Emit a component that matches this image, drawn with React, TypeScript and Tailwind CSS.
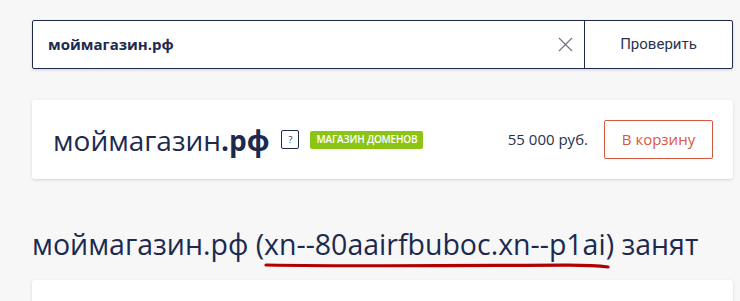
const NAVY = 'text-[#1c2a4f]';

function ClearIcon() {
  return (
    <svg width="15" height="15" viewBox="0 0 15 15" className="text-[#6f7589]">
      <path d="M1 1L14 14M14 1L1 14" stroke="currentColor" strokeWidth="1.2" fill="none" />
    </svg>
  );
}

function SearchBar() {
  return (
    <div className="flex h-[49px] w-[701px] rounded-[2px] border border-[#1e2a4c] bg-white shadow-[0_1px_3px_rgba(30,42,76,0.18)]">
      <div className="flex flex-1 items-center pl-[15px] pr-[4px]">
        <span className={`flex-1 text-[15px] font-bold ${NAVY}`}>моймагазин.рф</span>
        <button className="flex h-[40px] w-[30px] items-center justify-center">
          <ClearIcon />
        </button>
      </div>
      <button className="w-[148px] border-l border-[#1e2a4c] font-['Roboto'] text-[15px] text-[#2a3352]">
        Проверить
      </button>
    </div>
  );
}

function DomainCard() {
  return (
    <div className="flex h-[79px] w-[701px] items-center rounded-[3px] bg-white pl-[21px] pr-[20px] shadow-[0_1px_3px_rgba(30,42,76,0.16)]">
      <div className={`text-[28px] leading-none ${NAVY}`}>
        моймагазин<span className="font-bold">.рф</span>
      </div>
      <span className="ml-[12px] flex h-[19px] w-[18px] items-center justify-center rounded-[2px] border border-[#1e2a4c] text-[9px] text-[#1e2a4c]">
        ?
      </span>
      <span className="ml-[11px] flex h-[18px] items-center rounded-[2px] bg-[#8cc414] px-[6px] text-[10px] font-semibold uppercase tracking-[-0.2px] text-white">
        Магазин доменов
      </span>
      <span className="ml-auto text-[15px] text-[#26314f]">55 000 руб.</span>
      <button className="ml-[16px] h-[39px] w-[109px] rounded-[2px] border border-[#d9573f] text-[15px] text-[#d9573f]">
        В корзину
      </button>
    </div>
  );
}

function Underline() {
  return (
    <svg
      width="350"
      height="10"
      viewBox="0 0 350 10"
      className="pointer-events-none absolute left-[232px] top-[38px]"
    >
      <path
        d="M2 3 C 90 4.5, 200 3.5, 300 3.2 C 320 3.1, 335 3.8, 344 5"
        stroke="#b20000"
        strokeWidth="3.2"
        strokeLinecap="round"
        fill="none"
      />
    </svg>
  );
}

export default function App() {
  return (
    <div className="h-[301px] w-[740px] overflow-hidden bg-[#f7f7f8] pl-[32px] pt-[20px] font-['Open_Sans',sans-serif]">
      <SearchBar />
      <div className="mt-[31px]">
        <DomainCard />
      </div>
      <div className="relative mt-[45px]">
        <h1 className={`whitespace-nowrap text-[28.5px] leading-[40px] ${NAVY}`}>
          моймагазин.рф (xn--80aairfbuboc.xn--p1ai) занят
        </h1>
        <Underline />
      </div>
      <div className="mt-[16px] h-[40px] w-[701px] rounded-[3px] bg-white shadow-[0_1px_3px_rgba(30,42,76,0.16)]" />
    </div>
  );
}
